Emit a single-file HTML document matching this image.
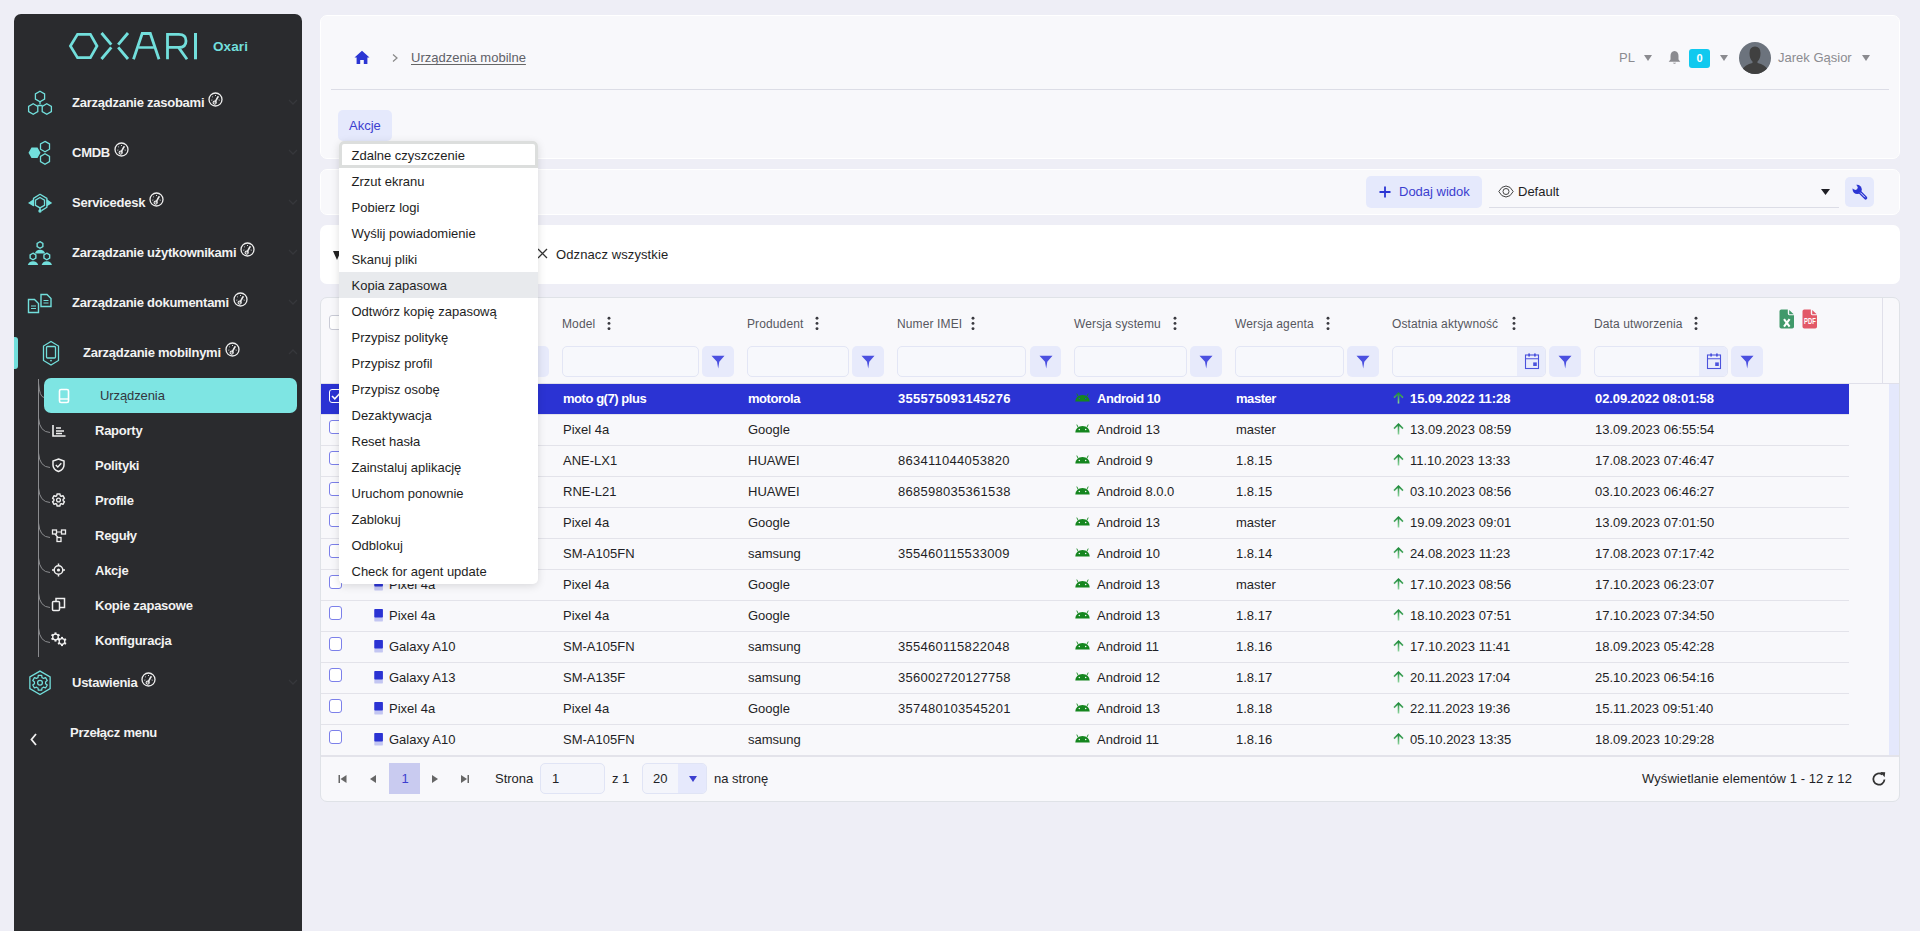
<!DOCTYPE html>
<html><head><meta charset="utf-8"><style>
*{box-sizing:border-box;margin:0;padding:0}
html,body{width:1920px;height:931px;overflow:hidden;background:#eeeef6;font-family:"Liberation Sans",sans-serif;color:#222}
.a{position:absolute;white-space:nowrap}
#sb{position:absolute;left:14px;top:14px;width:288px;height:930px;background:#2a2b2e;border-radius:7px 7px 0 0}
.mi{position:absolute;font-size:13px;font-weight:700;color:#f2f2f2;letter-spacing:-0.25px;line-height:16px;white-space:nowrap}
.card{position:absolute;left:320px;width:1580px;background:#f8f8fb;border-radius:7px}
</style></head><body>
<div id="sb"></div>
<div class="a" style="left:14px;top:337px;width:4px;height:32px;background:#72dfdc;border-radius:0 3px 3px 0"></div>
<div class="a" style="left:44px;top:378px;width:253px;height:35px;background:#7ee5e3;border-radius:7px"></div>
<svg class="a" style="left:0;top:0" width="320" height="931"><path d="M70.4,46 L77.5,34.3 L90.4,34.3 L97,46 L90.4,57.7 L77.5,57.7Z" fill="none" stroke="#72dfdc" stroke-width="2.7"/><path d="M101.5,33 L111.3,44.6 M111.3,47.4 L101.5,59 M128,33 L118.2,44.6 M118.2,47.4 L128,59" fill="none" stroke="#72dfdc" stroke-width="2.9"/><path d="M133.5,59.3 L142.2,33.5 L150.3,33.5 L159,59.3" fill="none" stroke="#72dfdc" stroke-width="2.8" stroke-linejoin="miter"/><path d="M138.6,47.5 L153.9,47.5" stroke="#72dfdc" stroke-width="2.5"/><path d="M167.5,59.3 L167.5,34.4 L178.8,34.4 Q186,34.4 186,40.9 Q186,47.4 178.8,47.4 L167.5,47.4 M178.5,47.4 L187,59.3" fill="none" stroke="#72dfdc" stroke-width="2.8"/><path d="M195.5,33 L195.5,59.3" stroke="#72dfdc" stroke-width="3"/><path d="M40.00,91.20 L44.59,93.85 L44.59,99.15 L40.00,101.80 L35.41,99.15 L35.41,93.85Z" fill="none" stroke="#72dfdc" stroke-width="1.3"/>
<path d="M33.20,103.70 L37.79,106.35 L37.79,111.65 L33.20,114.30 L28.61,111.65 L28.61,106.35Z" fill="none" stroke="#72dfdc" stroke-width="1.3"/>
<path d="M46.80,103.70 L51.39,106.35 L51.39,111.65 L46.80,114.30 L42.21,111.65 L42.21,106.35Z" fill="none" stroke="#72dfdc" stroke-width="1.3"/>
<path d="M40,101.8 L40,104.3 M37.5,105.5 L42.5,105.5" stroke="#72dfdc" stroke-width="1.3"/>
<path d="M40.50,152.80 L37.50,158.00 L31.50,158.00 L28.50,152.80 L31.50,147.60 L37.50,147.60Z" fill="#72dfdc"/>
<path d="M45.00,141.40 L49.50,144.00 L49.50,149.20 L45.00,151.80 L40.50,149.20 L40.50,144.00Z" fill="none" stroke="#72dfdc" stroke-width="1.3"/>
<path d="M45.00,153.80 L49.50,156.40 L49.50,161.60 L45.00,164.20 L40.50,161.60 L40.50,156.40Z" fill="none" stroke="#72dfdc" stroke-width="1.3"/>
<path d="M40.00,197.50 L44.50,200.10 L44.50,205.30 L40.00,207.90 L35.50,205.30 L35.50,200.10Z" fill="none" stroke="#72dfdc" stroke-width="1.3"/>
<path d="M33.5,206 L33.5,198.4 L40,194.3 L46.9,198.4 L46.9,207.3 L41.5,210.6" fill="none" stroke="#72dfdc" stroke-width="1.3" stroke-linejoin="round"/>
<path d="M28,202.9 L33.8,199 L33.8,206.5Z M52.2,202.9 L46.6,199 L46.6,206.5Z" fill="#72dfdc"/>
<path d="M40,207.5 L40,210" stroke="#72dfdc" stroke-width="1.4"/><circle cx="40" cy="211" r="1.7" fill="#72dfdc"/>
<path d="M40.00,241.70 L42.86,243.35 L42.86,246.65 L40.00,248.30 L37.14,246.65 L37.14,243.35Z" fill="none" stroke="#72dfdc" stroke-width="1.4"/><path d="M34.8,253.6 Q35.8,250 40,249.8 Q44.2,250 45.2,253.6Z" fill="#72dfdc"/>
<path d="M33.00,253.20 L35.86,254.85 L35.86,258.15 L33.00,259.80 L30.14,258.15 L30.14,254.85Z" fill="none" stroke="#72dfdc" stroke-width="1.4"/><path d="M27.8,265.1 Q28.8,261.5 33,261.3 Q37.2,261.5 38.2,265.1Z" fill="#72dfdc"/>
<path d="M46.80,253.20 L49.66,254.85 L49.66,258.15 L46.80,259.80 L43.94,258.15 L43.94,254.85Z" fill="none" stroke="#72dfdc" stroke-width="1.4"/><path d="M41.599999999999994,265.1 Q42.599999999999994,261.5 46.8,261.3 Q51.0,261.5 52.0,265.1Z" fill="#72dfdc"/>
<path d="M28.5,299.5 L34.5,299.5 L38.5,303.5 L38.5,312.5 L28.5,312.5Z" fill="none" stroke="#72dfdc" stroke-width="1.4"/><path d="M31.0,306.0 L36.0,306.0 M31.0,308.5 L36.0,308.5" stroke="#72dfdc" stroke-width="1.2"/>
<path d="M41,294.5 L47,294.5 L51,298.5 L51,306.5 L41,306.5Z" fill="none" stroke="#72dfdc" stroke-width="1.4"/><path d="M43.5,300.5 L48.5,300.5 M43.5,303.0 L48.5,303.0" stroke="#72dfdc" stroke-width="1.2"/>
<path d="M51,341.5 L58.5,346 L58.5,360.5 L51,365 L43.5,360.5 L43.5,346Z" fill="none" stroke="#72dfdc" stroke-width="1.3"/>
<rect x="46.5" y="346.5" width="9" height="11.5" rx="1" fill="none" stroke="#72dfdc" stroke-width="1.3"/><circle cx="51" cy="360.6" r="0.9" fill="#72dfdc"/>
<path d="M40.00,671.10 L50.13,676.95 L50.13,688.65 L40.00,694.50 L29.87,688.65 L29.87,676.95Z" fill="none" stroke="#72dfdc" stroke-width="1.3"/>
<path d="M37.99,677.57 L38.29,675.39 L41.71,675.39 L42.01,677.57 A5.6,5.6 0 0 1 43.52,678.45 L45.56,677.62 L47.27,680.58 L45.53,681.92 A5.6,5.6 0 0 1 45.53,683.68 L47.27,685.02 L45.56,687.98 L43.52,687.15 A5.6,5.6 0 0 1 42.01,688.03 L41.71,690.21 L38.29,690.21 L37.99,688.03 A5.6,5.6 0 0 1 36.48,687.15 L34.44,687.98 L32.73,685.02 L34.47,683.68 A5.6,5.6 0 0 1 34.47,681.92 L32.73,680.58 L34.44,677.62 L36.48,678.45 A5.6,5.6 0 0 1 37.99,677.57Z" fill="none" stroke="#72dfdc" stroke-width="1.25" stroke-linejoin="round"/><circle cx="40" cy="682.8" r="2.4" fill="none" stroke="#72dfdc" stroke-width="1.25"/>
<path d="M38.5,379 L38.5,657" stroke="#8a8b8e" stroke-width="1"/>
<path d="M38.5,383 Q39.5,397 44,397.5" fill="none" stroke="#8a8b8e" stroke-width="1"/>
<path d="M38.5,418 Q39.5,432 50,432.5" fill="none" stroke="#8a8b8e" stroke-width="1"/>
<path d="M38.5,453 Q39.5,467 50,467.5" fill="none" stroke="#8a8b8e" stroke-width="1"/>
<path d="M38.5,488 Q39.5,502 50,502.5" fill="none" stroke="#8a8b8e" stroke-width="1"/>
<path d="M38.5,523 Q39.5,537 50,537.5" fill="none" stroke="#8a8b8e" stroke-width="1"/>
<path d="M38.5,558 Q39.5,572 50,572.5" fill="none" stroke="#8a8b8e" stroke-width="1"/>
<path d="M38.5,593 Q39.5,607 50,607.5" fill="none" stroke="#8a8b8e" stroke-width="1"/>
<path d="M38.5,628 Q39.5,642 50,642.5" fill="none" stroke="#8a8b8e" stroke-width="1"/>
<rect x="59.5" y="389.5" width="9" height="13" rx="1.5" fill="none" stroke="#fff" stroke-width="1.6"/><path d="M60,399 L68,399" stroke="#fff" stroke-width="1.4"/>
<path d="M53,425 L53,436 L65.5,436" fill="none" stroke="#f0f0f0" stroke-width="1.6"/><path d="M56,428 L61,428 M56,431 L64,431 M56,433.5 L62,433.5" stroke="#f0f0f0" stroke-width="1.4"/>
<path d="M58.5,459 L64,461 L64,465 Q64,469.5 58.5,471.5 Q53,469.5 53,465 L53,461Z" fill="none" stroke="#f0f0f0" stroke-width="1.5"/><path d="M55.8,465 L57.8,467 L61.3,463.3" fill="none" stroke="#f0f0f0" stroke-width="1.4"/>
<path d="M56.78,495.73 L57.00,493.98 L60.00,493.98 L60.22,495.73 A4.6,4.6 0 0 1 61.33,496.38 L62.96,495.69 L64.46,498.29 L63.06,499.36 A4.6,4.6 0 0 1 63.06,500.64 L64.46,501.71 L62.96,504.31 L61.33,503.62 A4.6,4.6 0 0 1 60.22,504.27 L60.00,506.02 L57.00,506.02 L56.78,504.27 A4.6,4.6 0 0 1 55.67,503.62 L54.04,504.31 L52.54,501.71 L53.94,500.64 A4.6,4.6 0 0 1 53.94,499.36 L52.54,498.29 L54.04,495.69 L55.67,496.38 A4.6,4.6 0 0 1 56.78,495.73Z" fill="none" stroke="#f0f0f0" stroke-width="1.4" stroke-linejoin="round"/><circle cx="58.5" cy="500" r="1.9" fill="none" stroke="#f0f0f0" stroke-width="1.3"/>
<rect x="52.5" y="530" width="4" height="4" fill="none" stroke="#f0f0f0" stroke-width="1.3"/><rect x="61.5" y="530" width="4" height="4" fill="none" stroke="#f0f0f0" stroke-width="1.3"/><rect x="57" y="537.5" width="4" height="4" fill="none" stroke="#f0f0f0" stroke-width="1.3"/><path d="M56.5,532 L61.5,532 M55,534 L58,537.5" stroke="#f0f0f0" stroke-width="1.2"/>
<circle cx="58.5" cy="570" r="4.3" fill="none" stroke="#f0f0f0" stroke-width="1.5"/><circle cx="58.5" cy="570" r="1.6" fill="#f0f0f0"/><path d="M58.5,563.5 L58.5,565.5 M58.5,574.5 L58.5,576.5 M52,570 L54,570 M63,570 L65,570" stroke="#f0f0f0" stroke-width="1.5"/>
<rect x="52.5" y="601.5" width="7" height="9" rx="1" fill="none" stroke="#f0f0f0" stroke-width="1.5"/><path d="M56,601 L56,598.5 L64.5,598.5 L64.5,607.5 L60,607.5" fill="none" stroke="#f0f0f0" stroke-width="1.5"/>
<rect x="54.5" y="632.4000000000001" width="2" height="2" transform="rotate(0 55.5 637)" fill="#f0f0f0"/><rect x="54.5" y="632.4000000000001" width="2" height="2" transform="rotate(60 55.5 637)" fill="#f0f0f0"/><rect x="54.5" y="632.4000000000001" width="2" height="2" transform="rotate(120 55.5 637)" fill="#f0f0f0"/><rect x="54.5" y="632.4000000000001" width="2" height="2" transform="rotate(180 55.5 637)" fill="#f0f0f0"/><rect x="54.5" y="632.4000000000001" width="2" height="2" transform="rotate(240 55.5 637)" fill="#f0f0f0"/><rect x="54.5" y="632.4000000000001" width="2" height="2" transform="rotate(300 55.5 637)" fill="#f0f0f0"/><circle cx="55.5" cy="637" r="2.8" fill="none" stroke="#f0f0f0" stroke-width="1.3"/><rect x="61" y="636.9000000000001" width="2" height="2" transform="rotate(0 62 641.5)" fill="#f0f0f0"/><rect x="61" y="636.9000000000001" width="2" height="2" transform="rotate(60 62 641.5)" fill="#f0f0f0"/><rect x="61" y="636.9000000000001" width="2" height="2" transform="rotate(120 62 641.5)" fill="#f0f0f0"/><rect x="61" y="636.9000000000001" width="2" height="2" transform="rotate(180 62 641.5)" fill="#f0f0f0"/><rect x="61" y="636.9000000000001" width="2" height="2" transform="rotate(240 62 641.5)" fill="#f0f0f0"/><rect x="61" y="636.9000000000001" width="2" height="2" transform="rotate(300 62 641.5)" fill="#f0f0f0"/><circle cx="62" cy="641.5" r="2.8" fill="none" stroke="#f0f0f0" stroke-width="1.3"/>
<path d="M36,734 L31.5,739.5 L36,745" fill="none" stroke="#f0f0f0" stroke-width="1.8"/>
<path d="M289,100 L293,104 L297,100" fill="none" stroke="#36373b" stroke-width="1.3"/>
<path d="M289,150 L293,154 L297,150" fill="none" stroke="#36373b" stroke-width="1.3"/>
<path d="M289,200 L293,204 L297,200" fill="none" stroke="#36373b" stroke-width="1.3"/>
<path d="M289,250 L293,254 L297,250" fill="none" stroke="#36373b" stroke-width="1.3"/>
<path d="M289,300 L293,304 L297,300" fill="none" stroke="#36373b" stroke-width="1.3"/>
<path d="M289,680 L293,684 L297,680" fill="none" stroke="#36373b" stroke-width="1.3"/>
<path d="M289,354 L293,350 L297,354" fill="none" stroke="#36373b" stroke-width="1.3"/></svg>
<div class="a" style="left:213px;top:39px;font-size:13.5px;font-weight:700;color:#72dfdc;line-height:16px;letter-spacing:0.1px">Oxari</div>
<div class="mi" style="left:72px;top:95px"><span style="position:relative">Zarządzanie zasobami<svg width="15" height="15" viewBox="0 0 15 15" style="position:absolute;right:-19px;top:-3px"><circle cx="7.5" cy="7.5" r="6.5" fill="none" stroke="#ededed" stroke-width="1.3"/><path d="M6.8,10.6 L10.2,4.4" stroke="#ededed" stroke-width="1.6"/><circle cx="6.7" cy="10.6" r="1.6" fill="none" stroke="#ededed" stroke-width="1.1"/><path d="M3.4,8.2 L4.3,8 M4.2,4.6 L4.9,5.2 M7.5,3 L7.5,3.9 M10.8,4.6 L10.1,5.2 M11.6,8.2 L10.7,8" stroke="#ededed" stroke-width="1"/></svg></span></div>
<div class="mi" style="left:72px;top:145px"><span style="position:relative">CMDB<svg width="15" height="15" viewBox="0 0 15 15" style="position:absolute;right:-19px;top:-3px"><circle cx="7.5" cy="7.5" r="6.5" fill="none" stroke="#ededed" stroke-width="1.3"/><path d="M6.8,10.6 L10.2,4.4" stroke="#ededed" stroke-width="1.6"/><circle cx="6.7" cy="10.6" r="1.6" fill="none" stroke="#ededed" stroke-width="1.1"/><path d="M3.4,8.2 L4.3,8 M4.2,4.6 L4.9,5.2 M7.5,3 L7.5,3.9 M10.8,4.6 L10.1,5.2 M11.6,8.2 L10.7,8" stroke="#ededed" stroke-width="1"/></svg></span></div>
<div class="mi" style="left:72px;top:195px"><span style="position:relative">Servicedesk<svg width="15" height="15" viewBox="0 0 15 15" style="position:absolute;right:-19px;top:-3px"><circle cx="7.5" cy="7.5" r="6.5" fill="none" stroke="#ededed" stroke-width="1.3"/><path d="M6.8,10.6 L10.2,4.4" stroke="#ededed" stroke-width="1.6"/><circle cx="6.7" cy="10.6" r="1.6" fill="none" stroke="#ededed" stroke-width="1.1"/><path d="M3.4,8.2 L4.3,8 M4.2,4.6 L4.9,5.2 M7.5,3 L7.5,3.9 M10.8,4.6 L10.1,5.2 M11.6,8.2 L10.7,8" stroke="#ededed" stroke-width="1"/></svg></span></div>
<div class="mi" style="left:72px;top:245px"><span style="position:relative">Zarządzanie użytkownikami<svg width="15" height="15" viewBox="0 0 15 15" style="position:absolute;right:-19px;top:-3px"><circle cx="7.5" cy="7.5" r="6.5" fill="none" stroke="#ededed" stroke-width="1.3"/><path d="M6.8,10.6 L10.2,4.4" stroke="#ededed" stroke-width="1.6"/><circle cx="6.7" cy="10.6" r="1.6" fill="none" stroke="#ededed" stroke-width="1.1"/><path d="M3.4,8.2 L4.3,8 M4.2,4.6 L4.9,5.2 M7.5,3 L7.5,3.9 M10.8,4.6 L10.1,5.2 M11.6,8.2 L10.7,8" stroke="#ededed" stroke-width="1"/></svg></span></div>
<div class="mi" style="left:72px;top:295px"><span style="position:relative">Zarządzanie dokumentami<svg width="15" height="15" viewBox="0 0 15 15" style="position:absolute;right:-19px;top:-3px"><circle cx="7.5" cy="7.5" r="6.5" fill="none" stroke="#ededed" stroke-width="1.3"/><path d="M6.8,10.6 L10.2,4.4" stroke="#ededed" stroke-width="1.6"/><circle cx="6.7" cy="10.6" r="1.6" fill="none" stroke="#ededed" stroke-width="1.1"/><path d="M3.4,8.2 L4.3,8 M4.2,4.6 L4.9,5.2 M7.5,3 L7.5,3.9 M10.8,4.6 L10.1,5.2 M11.6,8.2 L10.7,8" stroke="#ededed" stroke-width="1"/></svg></span></div>
<div class="mi" style="left:83px;top:345px"><span style="position:relative">Zarządzanie mobilnymi<svg width="15" height="15" viewBox="0 0 15 15" style="position:absolute;right:-19px;top:-3px"><circle cx="7.5" cy="7.5" r="6.5" fill="none" stroke="#ededed" stroke-width="1.3"/><path d="M6.8,10.6 L10.2,4.4" stroke="#ededed" stroke-width="1.6"/><circle cx="6.7" cy="10.6" r="1.6" fill="none" stroke="#ededed" stroke-width="1.1"/><path d="M3.4,8.2 L4.3,8 M4.2,4.6 L4.9,5.2 M7.5,3 L7.5,3.9 M10.8,4.6 L10.1,5.2 M11.6,8.2 L10.7,8" stroke="#ededed" stroke-width="1"/></svg></span></div>
<div class="mi" style="left:72px;top:675px"><span style="position:relative">Ustawienia<svg width="15" height="15" viewBox="0 0 15 15" style="position:absolute;right:-19px;top:-3px"><circle cx="7.5" cy="7.5" r="6.5" fill="none" stroke="#ededed" stroke-width="1.3"/><path d="M6.8,10.6 L10.2,4.4" stroke="#ededed" stroke-width="1.6"/><circle cx="6.7" cy="10.6" r="1.6" fill="none" stroke="#ededed" stroke-width="1.1"/><path d="M3.4,8.2 L4.3,8 M4.2,4.6 L4.9,5.2 M7.5,3 L7.5,3.9 M10.8,4.6 L10.1,5.2 M11.6,8.2 L10.7,8" stroke="#ededed" stroke-width="1"/></svg></span></div>
<div class="a" style="left:100px;top:388px;font-size:13px;color:#33363f;line-height:16px;letter-spacing:-0.1px">Urządzenia</div>
<div class="mi" style="left:95px;top:423px">Raporty</div>
<div class="mi" style="left:95px;top:458px">Polityki</div>
<div class="mi" style="left:95px;top:493px">Profile</div>
<div class="mi" style="left:95px;top:528px">Reguły</div>
<div class="mi" style="left:95px;top:563px">Akcje</div>
<div class="mi" style="left:95px;top:598px">Kopie zapasowe</div>
<div class="mi" style="left:95px;top:633px">Konfiguracja</div>
<div class="mi" style="left:70px;top:725px">Przełącz menu</div>
<div class="card" style="top:15px;height:144px;border:1px solid #fff"></div>
<div class="card" style="top:169px;height:46px;border:1px solid #fff"></div>
<div class="card" style="top:225px;height:59px;background:#fff"></div>
<div class="card" style="top:297px;height:505px;border:1px solid #dfe2e7"></div>
<svg class="a" style="left:354px;top:50px" width="16" height="15" viewBox="0 0 16 15"><path d="M8,0.8 L15.5,7.6 L13.4,7.6 L13.4,14 L9.8,14 L9.8,10 L6.2,10 L6.2,14 L2.6,14 L2.6,7.6 L0.5,7.6Z" fill="#2b35d3"/></svg>
<svg class="a" style="left:390px;top:52px" width="10" height="12"><path d="M3,2.5 L7,6 L3,9.5" fill="none" stroke="#888" stroke-width="1.2"/></svg>
<div class="a" style="left:411px;top:51.00px;font-size:13px;line-height:13px;font-weight:400;color:#5f6168;text-decoration:underline;text-underline-offset:2px;text-decoration-color:#666;text-decoration-skip-ink:none">Urządzenia mobilne</div>
<div class="a" style="left:331px;top:89px;width:1558px;height:1px;background:#dcdde6"></div>
<div class="a" style="left:338px;top:110px;width:54px;height:31px;background:#e5e9fc;border-radius:5px"></div>
<div class="a" style="left:349px;top:119.00px;font-size:13px;line-height:13px;font-weight:400;color:#3b3ecf;">Akcje</div>
<div class="a" style="left:1619px;top:51.00px;font-size:13px;line-height:13px;font-weight:400;color:#8b8b90;">PL</div>
<svg class="a" style="left:1644px;top:55px" width="8" height="6"><path d="M0,0 L8,0 L4.0,6Z" fill="#8b8b90"/></svg>
<svg class="a" style="left:1668px;top:50px" width="13" height="15" viewBox="0 0 13 15"><path d="M6.5,1 Q10.5,1.5 10.5,6 L10.5,9.5 L12.3,11.8 L0.7,11.8 L2.5,9.5 L2.5,6 Q2.5,1.5 6.5,1Z" fill="#8b8b90"/><path d="M4.8,12.8 Q6.5,14.8 8.2,12.8Z" fill="#8b8b90"/></svg>
<div class="a" style="left:1689px;top:49px;width:21px;height:19px;background:#10c9ef;border-radius:3px;color:#fff;font-size:11px;font-weight:700;line-height:19px;text-align:center">0</div>
<svg class="a" style="left:1720px;top:55px" width="8" height="6"><path d="M0,0 L8,0 L4.0,6Z" fill="#8b8b90"/></svg>
<svg class="a" style="left:1739px;top:42px" width="32" height="32" viewBox="0 0 32 32"><defs><clipPath id="cav"><circle cx="16" cy="16" r="16"/></clipPath></defs><circle cx="16" cy="16" r="16" fill="#6c737d"/><g clip-path="url(#cav)"><path d="M16,4.5 Q21.5,4.5 21.5,11 Q21.5,17 18.5,19.5 L18.5,21 Q26,22.5 29,28 L29,33 L3,33 L3,28 Q6,22.5 13.5,21 L13.5,19.5 Q10.5,17 10.5,11 Q10.5,4.5 16,4.5Z" fill="#404040"/></g></svg>
<div class="a" style="left:1778px;top:51.00px;font-size:13px;line-height:13px;font-weight:400;color:#8b8b90;">Jarek Gąsior</div>
<svg class="a" style="left:1862px;top:55px" width="8" height="6"><path d="M0,0 L8,0 L4.0,6Z" fill="#8b8b90"/></svg>
<div class="a" style="left:1366px;top:176px;width:116px;height:32px;background:#e5e9fc;border-radius:5px"></div>
<svg class="a" style="left:1379px;top:186px" width="12" height="12"><path d="M6,0.5 L6,11.5 M0.5,6 L11.5,6" stroke="#2b35d3" stroke-width="1.8"/></svg>
<div class="a" style="left:1399px;top:185.00px;font-size:13px;line-height:13px;font-weight:400;color:#3b3ecf;">Dodaj widok</div>
<svg class="a" style="left:1497.5px;top:184.5px" width="16" height="13" viewBox="0 0 16 13"><path d="M0.8,6.5 Q3.5,1 8,1 Q12.5,1 15.2,6.5 Q12.5,12 8,12 Q3.5,12 0.8,6.5Z" fill="none" stroke="#444" stroke-width="1"/><circle cx="8" cy="6.5" r="3" fill="none" stroke="#444" stroke-width="1"/></svg>
<div class="a" style="left:1518px;top:185.00px;font-size:13px;line-height:13px;font-weight:400;color:#1e1e24;">Default</div>
<svg class="a" style="left:1821px;top:189px" width="9" height="6"><path d="M0,0 L9,0 L4.5,6Z" fill="#1e1e24"/></svg>
<div class="a" style="left:1489px;top:207px;width:350px;height:1px;background:#dcdde6"></div>
<div class="a" style="left:1845px;top:177px;width:29px;height:30px;background:#e5e9fc;border-radius:5px"></div>
<svg class="a" style="left:1845px;top:177px" width="29" height="30" viewBox="0 0 29 30"><defs><mask id="wm"><rect width="29" height="30" fill="#fff"/><circle cx="10.4" cy="10.6" r="2.3" fill="#000"/><path d="M10.4,10.6 L7,7.2" stroke="#000" stroke-width="4.6"/></mask></defs><g mask="url(#wm)"><circle cx="12.2" cy="12.4" r="4.6" fill="#2b35d3"/></g><path d="M14.6,14.9 L20.6,20.9" stroke="#2b35d3" stroke-width="3.4" stroke-linecap="round"/><path d="M15.3,15.6 L20,20.3" stroke="#e5e9fc" stroke-width="1"/></svg>
<svg class="a" style="left:332px;top:250px" width="10" height="12"><path d="M1,1 L9,1 L5,10Z" fill="#222"/></svg>
<svg class="a" style="left:537px;top:248px" width="11" height="11"><path d="M1,1 L10,10 M10,1 L1,10" stroke="#333" stroke-width="1.3"/></svg>
<div class="a" style="left:556px;top:247.50px;font-size:13px;line-height:13px;font-weight:400;color:#1e1e24;letter-spacing:0.1px">Odznacz wszystkie</div>
<div class="a" style="left:1882px;top:298px;width:1px;height:85px;background:#e0e0ea"></div>
<div class="a" style="left:321px;top:383px;width:1578px;height:1px;background:#e0e0ea"></div>
<div class="a" style="left:1889px;top:384px;width:10px;height:371px;background:#e4e8fc"></div>
<div class="a" style="left:329px;top:315px;width:13px;height:15px;border:1px solid #c9cbd6;border-radius:3px;background:#fff"></div>
<div class="a" style="left:517px;top:346px;width:32px;height:31px;background:#e7eafb;border-radius:5px"></div>
<div class="a" style="left:562px;top:317.84px;font-size:12px;line-height:12px;font-weight:400;color:#56575e;letter-spacing:0.12px">Model</div>
<svg class="a" style="left:607px;top:316px" width="4" height="14"><circle cx="2" cy="2.2" r="1.45" fill="#3a3a40"/><circle cx="2" cy="7.4" r="1.45" fill="#3a3a40"/><circle cx="2" cy="12.6" r="1.45" fill="#3a3a40"/></svg>
<div class="a" style="left:562px;top:346px;width:137px;height:31px;border:1px solid #e3e6f5;border-radius:5px;background:#f7f8fc;overflow:hidden"></div>
<div class="a" style="left:702px;top:346px;width:32px;height:31px;background:#e7eafb;border-radius:5px"></div>
<svg class="a" style="left:711.0px;top:355px" width="14" height="14" viewBox="0 0 14 14"><path d="M0.5,0.8 L13.5,0.8 L8.3,6.8 L7.2,13.6 L6,6.8Z" fill="#4b50e0"/></svg>
<div class="a" style="left:747px;top:317.84px;font-size:12px;line-height:12px;font-weight:400;color:#56575e;letter-spacing:0.12px">Produdent</div>
<svg class="a" style="left:815px;top:316px" width="4" height="14"><circle cx="2" cy="2.2" r="1.45" fill="#3a3a40"/><circle cx="2" cy="7.4" r="1.45" fill="#3a3a40"/><circle cx="2" cy="12.6" r="1.45" fill="#3a3a40"/></svg>
<div class="a" style="left:747px;top:346px;width:101.5px;height:31px;border:1px solid #e3e6f5;border-radius:5px;background:#f7f8fc;overflow:hidden"></div>
<div class="a" style="left:852px;top:346px;width:32px;height:31px;background:#e7eafb;border-radius:5px"></div>
<svg class="a" style="left:861.0px;top:355px" width="14" height="14" viewBox="0 0 14 14"><path d="M0.5,0.8 L13.5,0.8 L8.3,6.8 L7.2,13.6 L6,6.8Z" fill="#4b50e0"/></svg>
<div class="a" style="left:897px;top:317.84px;font-size:12px;line-height:12px;font-weight:400;color:#56575e;letter-spacing:0.12px">Numer IMEI</div>
<svg class="a" style="left:971px;top:316px" width="4" height="14"><circle cx="2" cy="2.2" r="1.45" fill="#3a3a40"/><circle cx="2" cy="7.4" r="1.45" fill="#3a3a40"/><circle cx="2" cy="12.6" r="1.45" fill="#3a3a40"/></svg>
<div class="a" style="left:897px;top:346px;width:129px;height:31px;border:1px solid #e3e6f5;border-radius:5px;background:#f7f8fc;overflow:hidden"></div>
<div class="a" style="left:1030px;top:346px;width:31px;height:31px;background:#e7eafb;border-radius:5px"></div>
<svg class="a" style="left:1038.5px;top:355px" width="14" height="14" viewBox="0 0 14 14"><path d="M0.5,0.8 L13.5,0.8 L8.3,6.8 L7.2,13.6 L6,6.8Z" fill="#4b50e0"/></svg>
<div class="a" style="left:1074px;top:317.84px;font-size:12px;line-height:12px;font-weight:400;color:#56575e;letter-spacing:0.12px">Wersja systemu</div>
<svg class="a" style="left:1173px;top:316px" width="4" height="14"><circle cx="2" cy="2.2" r="1.45" fill="#3a3a40"/><circle cx="2" cy="7.4" r="1.45" fill="#3a3a40"/><circle cx="2" cy="12.6" r="1.45" fill="#3a3a40"/></svg>
<div class="a" style="left:1074px;top:346px;width:112.5px;height:31px;border:1px solid #e3e6f5;border-radius:5px;background:#f7f8fc;overflow:hidden"></div>
<div class="a" style="left:1190px;top:346px;width:32px;height:31px;background:#e7eafb;border-radius:5px"></div>
<svg class="a" style="left:1199.0px;top:355px" width="14" height="14" viewBox="0 0 14 14"><path d="M0.5,0.8 L13.5,0.8 L8.3,6.8 L7.2,13.6 L6,6.8Z" fill="#4b50e0"/></svg>
<div class="a" style="left:1235px;top:317.84px;font-size:12px;line-height:12px;font-weight:400;color:#56575e;letter-spacing:0.12px">Wersja agenta</div>
<svg class="a" style="left:1326px;top:316px" width="4" height="14"><circle cx="2" cy="2.2" r="1.45" fill="#3a3a40"/><circle cx="2" cy="7.4" r="1.45" fill="#3a3a40"/><circle cx="2" cy="12.6" r="1.45" fill="#3a3a40"/></svg>
<div class="a" style="left:1235px;top:346px;width:108.5px;height:31px;border:1px solid #e3e6f5;border-radius:5px;background:#f7f8fc;overflow:hidden"></div>
<div class="a" style="left:1347px;top:346px;width:32px;height:31px;background:#e7eafb;border-radius:5px"></div>
<svg class="a" style="left:1356.0px;top:355px" width="14" height="14" viewBox="0 0 14 14"><path d="M0.5,0.8 L13.5,0.8 L8.3,6.8 L7.2,13.6 L6,6.8Z" fill="#4b50e0"/></svg>
<div class="a" style="left:1392px;top:317.84px;font-size:12px;line-height:12px;font-weight:400;color:#56575e;letter-spacing:0.12px">Ostatnia aktywność</div>
<svg class="a" style="left:1511.5px;top:316px" width="4" height="14"><circle cx="2" cy="2.2" r="1.45" fill="#3a3a40"/><circle cx="2" cy="7.4" r="1.45" fill="#3a3a40"/><circle cx="2" cy="12.6" r="1.45" fill="#3a3a40"/></svg>
<div class="a" style="left:1392px;top:346px;width:154px;height:31px;border:1px solid #e3e6f5;border-radius:5px;background:#f7f8fc;overflow:hidden"><div style="position:absolute;right:0;top:0;width:28px;height:29px;background:#e9ecfb"></div><svg style="position:absolute;right:5px;top:6px" width="16" height="17" viewBox="0 0 16 17"><rect x="1.5" y="2" width="13" height="13.5" fill="none" stroke="#4b52dc" stroke-width="1.1"/><path d="M1.5,5.7 L14.5,5.7" stroke="#4b52dc" stroke-width="1.1"/><rect x="4.2" y="0.5" width="1.8" height="3" fill="#4b52dc"/><rect x="10" y="0.5" width="1.8" height="3" fill="#4b52dc"/><rect x="9.2" y="9.4" width="3.6" height="3.6" fill="#4b52dc"/></svg></div>
<div class="a" style="left:1549px;top:346px;width:32px;height:31px;background:#e7eafb;border-radius:5px"></div>
<svg class="a" style="left:1558.0px;top:355px" width="14" height="14" viewBox="0 0 14 14"><path d="M0.5,0.8 L13.5,0.8 L8.3,6.8 L7.2,13.6 L6,6.8Z" fill="#4b50e0"/></svg>
<div class="a" style="left:1594px;top:317.84px;font-size:12px;line-height:12px;font-weight:400;color:#56575e;letter-spacing:0.12px">Data utworzenia</div>
<svg class="a" style="left:1694px;top:316px" width="4" height="14"><circle cx="2" cy="2.2" r="1.45" fill="#3a3a40"/><circle cx="2" cy="7.4" r="1.45" fill="#3a3a40"/><circle cx="2" cy="12.6" r="1.45" fill="#3a3a40"/></svg>
<div class="a" style="left:1594px;top:346px;width:133.5px;height:31px;border:1px solid #e3e6f5;border-radius:5px;background:#f7f8fc;overflow:hidden"><div style="position:absolute;right:0;top:0;width:28px;height:29px;background:#e9ecfb"></div><svg style="position:absolute;right:5px;top:6px" width="16" height="17" viewBox="0 0 16 17"><rect x="1.5" y="2" width="13" height="13.5" fill="none" stroke="#4b52dc" stroke-width="1.1"/><path d="M1.5,5.7 L14.5,5.7" stroke="#4b52dc" stroke-width="1.1"/><rect x="4.2" y="0.5" width="1.8" height="3" fill="#4b52dc"/><rect x="10" y="0.5" width="1.8" height="3" fill="#4b52dc"/><rect x="9.2" y="9.4" width="3.6" height="3.6" fill="#4b52dc"/></svg></div>
<div class="a" style="left:1731px;top:346px;width:32px;height:31px;background:#e7eafb;border-radius:5px"></div>
<svg class="a" style="left:1740.0px;top:355px" width="14" height="14" viewBox="0 0 14 14"><path d="M0.5,0.8 L13.5,0.8 L8.3,6.8 L7.2,13.6 L6,6.8Z" fill="#4b50e0"/></svg>
<svg class="a" style="left:1779px;top:308.5px" width="16" height="20" viewBox="0 0 16 20"><path d="M0.5,2.3 Q0.5,0.5 2.3,0.5 L8.8,0.5 L8.8,4.6 Q8.8,6.2 10.4,6.2 L15,6.2 L15,17.8 Q15,19.6 13.2,19.6 L2.3,19.6 Q0.5,19.6 0.5,17.8Z" fill="#40996a"/><path d="M10.2,0.9 L14.7,5.2 L10.2,5.2Z" fill="#40996a"/><path d="M5,10.2 L10.6,17.6 M10.6,10.2 L5,17.6" stroke="#fff" stroke-width="2.1"/></svg>
<svg class="a" style="left:1802px;top:308.5px" width="16" height="20" viewBox="0 0 16 20"><path d="M0.5,2.3 Q0.5,0.5 2.3,0.5 L8.8,0.5 L8.8,4.6 Q8.8,6.2 10.4,6.2 L15,6.2 L15,17.8 Q15,19.6 13.2,19.6 L2.3,19.6 Q0.5,19.6 0.5,17.8Z" fill="#e25868"/><path d="M10.2,0.9 L14.7,5.2 L10.2,5.2Z" fill="#e25868"/><text x="2" y="15" font-family="Liberation Sans" font-weight="700" font-size="8.6" fill="#fff" textLength="11.8" lengthAdjust="spacingAndGlyphs">PDF</text></svg>
<div class="a" style="left:321px;top:384px;width:1528px;height:30px;background:#2b33d3"></div>
<div class="a" style="left:329px;top:389px;width:13px;height:14px;border:1.3px solid #fff;border-radius:3px;background:#2b33d3"></div>
<svg class="a" style="left:331px;top:392px" width="10" height="8"><path d="M1,4 L3.8,6.8 L9,1.2" fill="none" stroke="#fff" stroke-width="1.6"/></svg>
<div class="a" style="left:563px;top:392.00px;font-size:13px;line-height:13px;font-weight:700;color:#fff;letter-spacing:-0.45px;">moto g(7) plus</div>
<div class="a" style="left:748px;top:392.00px;font-size:13px;line-height:13px;font-weight:700;color:#fff;letter-spacing:-0.45px;">motorola</div>
<div class="a" style="left:898px;top:392.00px;font-size:13px;line-height:13px;font-weight:700;color:#fff;letter-spacing:0.28px;">355575093145276</div>
<svg class="a" style="left:1075px;top:392px" width="15" height="10" viewBox="0 0 15 10"><path d="M0.3,9.6 Q0.8,3.2 7.5,3 Q14.2,3.2 14.7,9.6Z" fill="#15861f"/><path d="M3,4.2 L1.8,1.6 M12,4.2 L13.2,1.6" stroke="#15861f" stroke-width="0.9"/><circle cx="4.3" cy="6.5" r="0.75" fill="#2b33d3"/><circle cx="10.7" cy="6.5" r="0.75" fill="#2b33d3"/></svg>
<div class="a" style="left:1097px;top:392.00px;font-size:13px;line-height:13px;font-weight:700;color:#fff;letter-spacing:-0.45px;">Android 10</div>
<div class="a" style="left:1236px;top:392.00px;font-size:13px;line-height:13px;font-weight:700;color:#fff;letter-spacing:-0.45px;">master</div>
<svg class="a" style="left:1392.5px;top:392px" width="11" height="12" viewBox="0 0 11 12"><defs><linearGradient id="ag" x1="0" y1="0" x2="0" y2="1"><stop offset="0" stop-color="#1e8a3a"/><stop offset="1" stop-color="#8fd69f"/></linearGradient></defs><path d="M5.5,1.2 L5.5,11.6 M1,5.6 L5.5,1.2 L10,5.6" fill="none" stroke="url(#ag)" stroke-width="1.6"/></svg>
<div class="a" style="left:1410px;top:392.00px;font-size:13px;line-height:13px;font-weight:700;color:#fff;letter-spacing:-0.05px;">15.09.2022 11:28</div>
<div class="a" style="left:1595px;top:392.00px;font-size:13px;line-height:13px;font-weight:700;color:#fff;letter-spacing:-0.1px;">02.09.2022 08:01:58</div>
<div class="a" style="left:321px;top:414px;width:1528px;height:1px;background:#e3e3ea"></div>
<div class="a" style="left:329px;top:420px;width:13px;height:14px;border:1.3px solid #7c80ea;border-radius:3px;background:#fff"></div>
<svg class="a" style="left:373.5px;top:422.8px" width="10" height="13" viewBox="0 0 10 13"><rect x="0.3" y="0" width="8.6" height="12.6" rx="1.2" fill="#c3c6f2"/><rect x="0.3" y="0" width="8.6" height="8.6" rx="0.8" fill="#2b33d3"/></svg>
<div class="a" style="left:389px;top:423.00px;font-size:13px;line-height:13px;font-weight:400;color:#1f1f26;">Pixel 4a</div>
<div class="a" style="left:563px;top:423.00px;font-size:13px;line-height:13px;font-weight:400;color:#1f1f26;">Pixel 4a</div>
<div class="a" style="left:748px;top:423.00px;font-size:13px;line-height:13px;font-weight:400;color:#1f1f26;">Google</div>
<svg class="a" style="left:1075px;top:423px" width="15" height="10" viewBox="0 0 15 10"><path d="M0.3,9.6 Q0.8,3.2 7.5,3 Q14.2,3.2 14.7,9.6Z" fill="#15861f"/><path d="M3,4.2 L1.8,1.6 M12,4.2 L13.2,1.6" stroke="#15861f" stroke-width="0.9"/><circle cx="4.3" cy="6.5" r="0.75" fill="#f8f8fb"/><circle cx="10.7" cy="6.5" r="0.75" fill="#f8f8fb"/></svg>
<div class="a" style="left:1097px;top:423.00px;font-size:13px;line-height:13px;font-weight:400;color:#1f1f26;">Android 13</div>
<div class="a" style="left:1236px;top:423.00px;font-size:13px;line-height:13px;font-weight:400;color:#1f1f26;">master</div>
<svg class="a" style="left:1392.5px;top:423px" width="11" height="12" viewBox="0 0 11 12"><defs><linearGradient id="ag" x1="0" y1="0" x2="0" y2="1"><stop offset="0" stop-color="#1e8a3a"/><stop offset="1" stop-color="#8fd69f"/></linearGradient></defs><path d="M5.5,1.2 L5.5,11.6 M1,5.6 L5.5,1.2 L10,5.6" fill="none" stroke="url(#ag)" stroke-width="1.6"/></svg>
<div class="a" style="left:1410px;top:423.00px;font-size:13px;line-height:13px;font-weight:400;color:#1f1f26;">13.09.2023 08:59</div>
<div class="a" style="left:1595px;top:423.00px;font-size:13px;line-height:13px;font-weight:400;color:#1f1f26;">13.09.2023 06:55:54</div>
<div class="a" style="left:321px;top:445px;width:1528px;height:1px;background:#e3e3ea"></div>
<div class="a" style="left:329px;top:451px;width:13px;height:14px;border:1.3px solid #7c80ea;border-radius:3px;background:#fff"></div>
<svg class="a" style="left:373.5px;top:453.8px" width="10" height="13" viewBox="0 0 10 13"><rect x="0.3" y="0" width="8.6" height="12.6" rx="1.2" fill="#c3c6f2"/><rect x="0.3" y="0" width="8.6" height="8.6" rx="0.8" fill="#2b33d3"/></svg>
<div class="a" style="left:389px;top:454.00px;font-size:13px;line-height:13px;font-weight:400;color:#1f1f26;">ANE-LX1</div>
<div class="a" style="left:563px;top:454.00px;font-size:13px;line-height:13px;font-weight:400;color:#1f1f26;">ANE-LX1</div>
<div class="a" style="left:748px;top:454.00px;font-size:13px;line-height:13px;font-weight:400;color:#1f1f26;">HUAWEI</div>
<div class="a" style="left:898px;top:454.00px;font-size:13px;line-height:13px;font-weight:400;color:#1f1f26;letter-spacing:0.28px;">863411044053820</div>
<svg class="a" style="left:1075px;top:454px" width="15" height="10" viewBox="0 0 15 10"><path d="M0.3,9.6 Q0.8,3.2 7.5,3 Q14.2,3.2 14.7,9.6Z" fill="#15861f"/><path d="M3,4.2 L1.8,1.6 M12,4.2 L13.2,1.6" stroke="#15861f" stroke-width="0.9"/><circle cx="4.3" cy="6.5" r="0.75" fill="#f8f8fb"/><circle cx="10.7" cy="6.5" r="0.75" fill="#f8f8fb"/></svg>
<div class="a" style="left:1097px;top:454.00px;font-size:13px;line-height:13px;font-weight:400;color:#1f1f26;">Android 9</div>
<div class="a" style="left:1236px;top:454.00px;font-size:13px;line-height:13px;font-weight:400;color:#1f1f26;">1.8.15</div>
<svg class="a" style="left:1392.5px;top:454px" width="11" height="12" viewBox="0 0 11 12"><defs><linearGradient id="ag" x1="0" y1="0" x2="0" y2="1"><stop offset="0" stop-color="#1e8a3a"/><stop offset="1" stop-color="#8fd69f"/></linearGradient></defs><path d="M5.5,1.2 L5.5,11.6 M1,5.6 L5.5,1.2 L10,5.6" fill="none" stroke="url(#ag)" stroke-width="1.6"/></svg>
<div class="a" style="left:1410px;top:454.00px;font-size:13px;line-height:13px;font-weight:400;color:#1f1f26;">11.10.2023 13:33</div>
<div class="a" style="left:1595px;top:454.00px;font-size:13px;line-height:13px;font-weight:400;color:#1f1f26;">17.08.2023 07:46:47</div>
<div class="a" style="left:321px;top:476px;width:1528px;height:1px;background:#e3e3ea"></div>
<div class="a" style="left:329px;top:482px;width:13px;height:14px;border:1.3px solid #7c80ea;border-radius:3px;background:#fff"></div>
<svg class="a" style="left:373.5px;top:484.8px" width="10" height="13" viewBox="0 0 10 13"><rect x="0.3" y="0" width="8.6" height="12.6" rx="1.2" fill="#c3c6f2"/><rect x="0.3" y="0" width="8.6" height="8.6" rx="0.8" fill="#2b33d3"/></svg>
<div class="a" style="left:389px;top:485.00px;font-size:13px;line-height:13px;font-weight:400;color:#1f1f26;">RNE-L21</div>
<div class="a" style="left:563px;top:485.00px;font-size:13px;line-height:13px;font-weight:400;color:#1f1f26;">RNE-L21</div>
<div class="a" style="left:748px;top:485.00px;font-size:13px;line-height:13px;font-weight:400;color:#1f1f26;">HUAWEI</div>
<div class="a" style="left:898px;top:485.00px;font-size:13px;line-height:13px;font-weight:400;color:#1f1f26;letter-spacing:0.28px;">868598035361538</div>
<svg class="a" style="left:1075px;top:485px" width="15" height="10" viewBox="0 0 15 10"><path d="M0.3,9.6 Q0.8,3.2 7.5,3 Q14.2,3.2 14.7,9.6Z" fill="#15861f"/><path d="M3,4.2 L1.8,1.6 M12,4.2 L13.2,1.6" stroke="#15861f" stroke-width="0.9"/><circle cx="4.3" cy="6.5" r="0.75" fill="#f8f8fb"/><circle cx="10.7" cy="6.5" r="0.75" fill="#f8f8fb"/></svg>
<div class="a" style="left:1097px;top:485.00px;font-size:13px;line-height:13px;font-weight:400;color:#1f1f26;">Android 8.0.0</div>
<div class="a" style="left:1236px;top:485.00px;font-size:13px;line-height:13px;font-weight:400;color:#1f1f26;">1.8.15</div>
<svg class="a" style="left:1392.5px;top:485px" width="11" height="12" viewBox="0 0 11 12"><defs><linearGradient id="ag" x1="0" y1="0" x2="0" y2="1"><stop offset="0" stop-color="#1e8a3a"/><stop offset="1" stop-color="#8fd69f"/></linearGradient></defs><path d="M5.5,1.2 L5.5,11.6 M1,5.6 L5.5,1.2 L10,5.6" fill="none" stroke="url(#ag)" stroke-width="1.6"/></svg>
<div class="a" style="left:1410px;top:485.00px;font-size:13px;line-height:13px;font-weight:400;color:#1f1f26;">03.10.2023 08:56</div>
<div class="a" style="left:1595px;top:485.00px;font-size:13px;line-height:13px;font-weight:400;color:#1f1f26;">03.10.2023 06:46:27</div>
<div class="a" style="left:321px;top:507px;width:1528px;height:1px;background:#e3e3ea"></div>
<div class="a" style="left:329px;top:513px;width:13px;height:14px;border:1.3px solid #7c80ea;border-radius:3px;background:#fff"></div>
<svg class="a" style="left:373.5px;top:515.8px" width="10" height="13" viewBox="0 0 10 13"><rect x="0.3" y="0" width="8.6" height="12.6" rx="1.2" fill="#c3c6f2"/><rect x="0.3" y="0" width="8.6" height="8.6" rx="0.8" fill="#2b33d3"/></svg>
<div class="a" style="left:389px;top:516.00px;font-size:13px;line-height:13px;font-weight:400;color:#1f1f26;">Pixel 4a</div>
<div class="a" style="left:563px;top:516.00px;font-size:13px;line-height:13px;font-weight:400;color:#1f1f26;">Pixel 4a</div>
<div class="a" style="left:748px;top:516.00px;font-size:13px;line-height:13px;font-weight:400;color:#1f1f26;">Google</div>
<svg class="a" style="left:1075px;top:516px" width="15" height="10" viewBox="0 0 15 10"><path d="M0.3,9.6 Q0.8,3.2 7.5,3 Q14.2,3.2 14.7,9.6Z" fill="#15861f"/><path d="M3,4.2 L1.8,1.6 M12,4.2 L13.2,1.6" stroke="#15861f" stroke-width="0.9"/><circle cx="4.3" cy="6.5" r="0.75" fill="#f8f8fb"/><circle cx="10.7" cy="6.5" r="0.75" fill="#f8f8fb"/></svg>
<div class="a" style="left:1097px;top:516.00px;font-size:13px;line-height:13px;font-weight:400;color:#1f1f26;">Android 13</div>
<div class="a" style="left:1236px;top:516.00px;font-size:13px;line-height:13px;font-weight:400;color:#1f1f26;">master</div>
<svg class="a" style="left:1392.5px;top:516px" width="11" height="12" viewBox="0 0 11 12"><defs><linearGradient id="ag" x1="0" y1="0" x2="0" y2="1"><stop offset="0" stop-color="#1e8a3a"/><stop offset="1" stop-color="#8fd69f"/></linearGradient></defs><path d="M5.5,1.2 L5.5,11.6 M1,5.6 L5.5,1.2 L10,5.6" fill="none" stroke="url(#ag)" stroke-width="1.6"/></svg>
<div class="a" style="left:1410px;top:516.00px;font-size:13px;line-height:13px;font-weight:400;color:#1f1f26;">19.09.2023 09:01</div>
<div class="a" style="left:1595px;top:516.00px;font-size:13px;line-height:13px;font-weight:400;color:#1f1f26;">13.09.2023 07:01:50</div>
<div class="a" style="left:321px;top:538px;width:1528px;height:1px;background:#e3e3ea"></div>
<div class="a" style="left:329px;top:544px;width:13px;height:14px;border:1.3px solid #7c80ea;border-radius:3px;background:#fff"></div>
<svg class="a" style="left:373.5px;top:546.8px" width="10" height="13" viewBox="0 0 10 13"><rect x="0.3" y="0" width="8.6" height="12.6" rx="1.2" fill="#c3c6f2"/><rect x="0.3" y="0" width="8.6" height="8.6" rx="0.8" fill="#2b33d3"/></svg>
<div class="a" style="left:389px;top:547.00px;font-size:13px;line-height:13px;font-weight:400;color:#1f1f26;">Galaxy A10</div>
<div class="a" style="left:563px;top:547.00px;font-size:13px;line-height:13px;font-weight:400;color:#1f1f26;">SM-A105FN</div>
<div class="a" style="left:748px;top:547.00px;font-size:13px;line-height:13px;font-weight:400;color:#1f1f26;">samsung</div>
<div class="a" style="left:898px;top:547.00px;font-size:13px;line-height:13px;font-weight:400;color:#1f1f26;letter-spacing:0.28px;">355460115533009</div>
<svg class="a" style="left:1075px;top:547px" width="15" height="10" viewBox="0 0 15 10"><path d="M0.3,9.6 Q0.8,3.2 7.5,3 Q14.2,3.2 14.7,9.6Z" fill="#15861f"/><path d="M3,4.2 L1.8,1.6 M12,4.2 L13.2,1.6" stroke="#15861f" stroke-width="0.9"/><circle cx="4.3" cy="6.5" r="0.75" fill="#f8f8fb"/><circle cx="10.7" cy="6.5" r="0.75" fill="#f8f8fb"/></svg>
<div class="a" style="left:1097px;top:547.00px;font-size:13px;line-height:13px;font-weight:400;color:#1f1f26;">Android 10</div>
<div class="a" style="left:1236px;top:547.00px;font-size:13px;line-height:13px;font-weight:400;color:#1f1f26;">1.8.14</div>
<svg class="a" style="left:1392.5px;top:547px" width="11" height="12" viewBox="0 0 11 12"><defs><linearGradient id="ag" x1="0" y1="0" x2="0" y2="1"><stop offset="0" stop-color="#1e8a3a"/><stop offset="1" stop-color="#8fd69f"/></linearGradient></defs><path d="M5.5,1.2 L5.5,11.6 M1,5.6 L5.5,1.2 L10,5.6" fill="none" stroke="url(#ag)" stroke-width="1.6"/></svg>
<div class="a" style="left:1410px;top:547.00px;font-size:13px;line-height:13px;font-weight:400;color:#1f1f26;">24.08.2023 11:23</div>
<div class="a" style="left:1595px;top:547.00px;font-size:13px;line-height:13px;font-weight:400;color:#1f1f26;">17.08.2023 07:17:42</div>
<div class="a" style="left:321px;top:569px;width:1528px;height:1px;background:#e3e3ea"></div>
<div class="a" style="left:329px;top:575px;width:13px;height:14px;border:1.3px solid #7c80ea;border-radius:3px;background:#fff"></div>
<svg class="a" style="left:373.5px;top:577.8px" width="10" height="13" viewBox="0 0 10 13"><rect x="0.3" y="0" width="8.6" height="12.6" rx="1.2" fill="#c3c6f2"/><rect x="0.3" y="0" width="8.6" height="8.6" rx="0.8" fill="#2b33d3"/></svg>
<div class="a" style="left:389px;top:578.00px;font-size:13px;line-height:13px;font-weight:400;color:#1f1f26;">Pixel 4a</div>
<div class="a" style="left:563px;top:578.00px;font-size:13px;line-height:13px;font-weight:400;color:#1f1f26;">Pixel 4a</div>
<div class="a" style="left:748px;top:578.00px;font-size:13px;line-height:13px;font-weight:400;color:#1f1f26;">Google</div>
<svg class="a" style="left:1075px;top:578px" width="15" height="10" viewBox="0 0 15 10"><path d="M0.3,9.6 Q0.8,3.2 7.5,3 Q14.2,3.2 14.7,9.6Z" fill="#15861f"/><path d="M3,4.2 L1.8,1.6 M12,4.2 L13.2,1.6" stroke="#15861f" stroke-width="0.9"/><circle cx="4.3" cy="6.5" r="0.75" fill="#f8f8fb"/><circle cx="10.7" cy="6.5" r="0.75" fill="#f8f8fb"/></svg>
<div class="a" style="left:1097px;top:578.00px;font-size:13px;line-height:13px;font-weight:400;color:#1f1f26;">Android 13</div>
<div class="a" style="left:1236px;top:578.00px;font-size:13px;line-height:13px;font-weight:400;color:#1f1f26;">master</div>
<svg class="a" style="left:1392.5px;top:578px" width="11" height="12" viewBox="0 0 11 12"><defs><linearGradient id="ag" x1="0" y1="0" x2="0" y2="1"><stop offset="0" stop-color="#1e8a3a"/><stop offset="1" stop-color="#8fd69f"/></linearGradient></defs><path d="M5.5,1.2 L5.5,11.6 M1,5.6 L5.5,1.2 L10,5.6" fill="none" stroke="url(#ag)" stroke-width="1.6"/></svg>
<div class="a" style="left:1410px;top:578.00px;font-size:13px;line-height:13px;font-weight:400;color:#1f1f26;">17.10.2023 08:56</div>
<div class="a" style="left:1595px;top:578.00px;font-size:13px;line-height:13px;font-weight:400;color:#1f1f26;">17.10.2023 06:23:07</div>
<div class="a" style="left:321px;top:600px;width:1528px;height:1px;background:#e3e3ea"></div>
<div class="a" style="left:329px;top:606px;width:13px;height:14px;border:1.3px solid #7c80ea;border-radius:3px;background:#fff"></div>
<svg class="a" style="left:373.5px;top:608.8px" width="10" height="13" viewBox="0 0 10 13"><rect x="0.3" y="0" width="8.6" height="12.6" rx="1.2" fill="#c3c6f2"/><rect x="0.3" y="0" width="8.6" height="8.6" rx="0.8" fill="#2b33d3"/></svg>
<div class="a" style="left:389px;top:609.00px;font-size:13px;line-height:13px;font-weight:400;color:#1f1f26;">Pixel 4a</div>
<div class="a" style="left:563px;top:609.00px;font-size:13px;line-height:13px;font-weight:400;color:#1f1f26;">Pixel 4a</div>
<div class="a" style="left:748px;top:609.00px;font-size:13px;line-height:13px;font-weight:400;color:#1f1f26;">Google</div>
<svg class="a" style="left:1075px;top:609px" width="15" height="10" viewBox="0 0 15 10"><path d="M0.3,9.6 Q0.8,3.2 7.5,3 Q14.2,3.2 14.7,9.6Z" fill="#15861f"/><path d="M3,4.2 L1.8,1.6 M12,4.2 L13.2,1.6" stroke="#15861f" stroke-width="0.9"/><circle cx="4.3" cy="6.5" r="0.75" fill="#f8f8fb"/><circle cx="10.7" cy="6.5" r="0.75" fill="#f8f8fb"/></svg>
<div class="a" style="left:1097px;top:609.00px;font-size:13px;line-height:13px;font-weight:400;color:#1f1f26;">Android 13</div>
<div class="a" style="left:1236px;top:609.00px;font-size:13px;line-height:13px;font-weight:400;color:#1f1f26;">1.8.17</div>
<svg class="a" style="left:1392.5px;top:609px" width="11" height="12" viewBox="0 0 11 12"><defs><linearGradient id="ag" x1="0" y1="0" x2="0" y2="1"><stop offset="0" stop-color="#1e8a3a"/><stop offset="1" stop-color="#8fd69f"/></linearGradient></defs><path d="M5.5,1.2 L5.5,11.6 M1,5.6 L5.5,1.2 L10,5.6" fill="none" stroke="url(#ag)" stroke-width="1.6"/></svg>
<div class="a" style="left:1410px;top:609.00px;font-size:13px;line-height:13px;font-weight:400;color:#1f1f26;">18.10.2023 07:51</div>
<div class="a" style="left:1595px;top:609.00px;font-size:13px;line-height:13px;font-weight:400;color:#1f1f26;">17.10.2023 07:34:50</div>
<div class="a" style="left:321px;top:631px;width:1528px;height:1px;background:#e3e3ea"></div>
<div class="a" style="left:329px;top:637px;width:13px;height:14px;border:1.3px solid #7c80ea;border-radius:3px;background:#fff"></div>
<svg class="a" style="left:373.5px;top:639.8px" width="10" height="13" viewBox="0 0 10 13"><rect x="0.3" y="0" width="8.6" height="12.6" rx="1.2" fill="#c3c6f2"/><rect x="0.3" y="0" width="8.6" height="8.6" rx="0.8" fill="#2b33d3"/></svg>
<div class="a" style="left:389px;top:640.00px;font-size:13px;line-height:13px;font-weight:400;color:#1f1f26;">Galaxy A10</div>
<div class="a" style="left:563px;top:640.00px;font-size:13px;line-height:13px;font-weight:400;color:#1f1f26;">SM-A105FN</div>
<div class="a" style="left:748px;top:640.00px;font-size:13px;line-height:13px;font-weight:400;color:#1f1f26;">samsung</div>
<div class="a" style="left:898px;top:640.00px;font-size:13px;line-height:13px;font-weight:400;color:#1f1f26;letter-spacing:0.28px;">355460115822048</div>
<svg class="a" style="left:1075px;top:640px" width="15" height="10" viewBox="0 0 15 10"><path d="M0.3,9.6 Q0.8,3.2 7.5,3 Q14.2,3.2 14.7,9.6Z" fill="#15861f"/><path d="M3,4.2 L1.8,1.6 M12,4.2 L13.2,1.6" stroke="#15861f" stroke-width="0.9"/><circle cx="4.3" cy="6.5" r="0.75" fill="#f8f8fb"/><circle cx="10.7" cy="6.5" r="0.75" fill="#f8f8fb"/></svg>
<div class="a" style="left:1097px;top:640.00px;font-size:13px;line-height:13px;font-weight:400;color:#1f1f26;">Android 11</div>
<div class="a" style="left:1236px;top:640.00px;font-size:13px;line-height:13px;font-weight:400;color:#1f1f26;">1.8.16</div>
<svg class="a" style="left:1392.5px;top:640px" width="11" height="12" viewBox="0 0 11 12"><defs><linearGradient id="ag" x1="0" y1="0" x2="0" y2="1"><stop offset="0" stop-color="#1e8a3a"/><stop offset="1" stop-color="#8fd69f"/></linearGradient></defs><path d="M5.5,1.2 L5.5,11.6 M1,5.6 L5.5,1.2 L10,5.6" fill="none" stroke="url(#ag)" stroke-width="1.6"/></svg>
<div class="a" style="left:1410px;top:640.00px;font-size:13px;line-height:13px;font-weight:400;color:#1f1f26;">17.10.2023 11:41</div>
<div class="a" style="left:1595px;top:640.00px;font-size:13px;line-height:13px;font-weight:400;color:#1f1f26;">18.09.2023 05:42:28</div>
<div class="a" style="left:321px;top:662px;width:1528px;height:1px;background:#e3e3ea"></div>
<div class="a" style="left:329px;top:668px;width:13px;height:14px;border:1.3px solid #7c80ea;border-radius:3px;background:#fff"></div>
<svg class="a" style="left:373.5px;top:670.8px" width="10" height="13" viewBox="0 0 10 13"><rect x="0.3" y="0" width="8.6" height="12.6" rx="1.2" fill="#c3c6f2"/><rect x="0.3" y="0" width="8.6" height="8.6" rx="0.8" fill="#2b33d3"/></svg>
<div class="a" style="left:389px;top:671.00px;font-size:13px;line-height:13px;font-weight:400;color:#1f1f26;">Galaxy A13</div>
<div class="a" style="left:563px;top:671.00px;font-size:13px;line-height:13px;font-weight:400;color:#1f1f26;">SM-A135F</div>
<div class="a" style="left:748px;top:671.00px;font-size:13px;line-height:13px;font-weight:400;color:#1f1f26;">samsung</div>
<div class="a" style="left:898px;top:671.00px;font-size:13px;line-height:13px;font-weight:400;color:#1f1f26;letter-spacing:0.28px;">356002720127758</div>
<svg class="a" style="left:1075px;top:671px" width="15" height="10" viewBox="0 0 15 10"><path d="M0.3,9.6 Q0.8,3.2 7.5,3 Q14.2,3.2 14.7,9.6Z" fill="#15861f"/><path d="M3,4.2 L1.8,1.6 M12,4.2 L13.2,1.6" stroke="#15861f" stroke-width="0.9"/><circle cx="4.3" cy="6.5" r="0.75" fill="#f8f8fb"/><circle cx="10.7" cy="6.5" r="0.75" fill="#f8f8fb"/></svg>
<div class="a" style="left:1097px;top:671.00px;font-size:13px;line-height:13px;font-weight:400;color:#1f1f26;">Android 12</div>
<div class="a" style="left:1236px;top:671.00px;font-size:13px;line-height:13px;font-weight:400;color:#1f1f26;">1.8.17</div>
<svg class="a" style="left:1392.5px;top:671px" width="11" height="12" viewBox="0 0 11 12"><defs><linearGradient id="ag" x1="0" y1="0" x2="0" y2="1"><stop offset="0" stop-color="#1e8a3a"/><stop offset="1" stop-color="#8fd69f"/></linearGradient></defs><path d="M5.5,1.2 L5.5,11.6 M1,5.6 L5.5,1.2 L10,5.6" fill="none" stroke="url(#ag)" stroke-width="1.6"/></svg>
<div class="a" style="left:1410px;top:671.00px;font-size:13px;line-height:13px;font-weight:400;color:#1f1f26;">20.11.2023 17:04</div>
<div class="a" style="left:1595px;top:671.00px;font-size:13px;line-height:13px;font-weight:400;color:#1f1f26;">25.10.2023 06:54:16</div>
<div class="a" style="left:321px;top:693px;width:1528px;height:1px;background:#e3e3ea"></div>
<div class="a" style="left:329px;top:699px;width:13px;height:14px;border:1.3px solid #7c80ea;border-radius:3px;background:#fff"></div>
<svg class="a" style="left:373.5px;top:701.8px" width="10" height="13" viewBox="0 0 10 13"><rect x="0.3" y="0" width="8.6" height="12.6" rx="1.2" fill="#c3c6f2"/><rect x="0.3" y="0" width="8.6" height="8.6" rx="0.8" fill="#2b33d3"/></svg>
<div class="a" style="left:389px;top:702.00px;font-size:13px;line-height:13px;font-weight:400;color:#1f1f26;">Pixel 4a</div>
<div class="a" style="left:563px;top:702.00px;font-size:13px;line-height:13px;font-weight:400;color:#1f1f26;">Pixel 4a</div>
<div class="a" style="left:748px;top:702.00px;font-size:13px;line-height:13px;font-weight:400;color:#1f1f26;">Google</div>
<div class="a" style="left:898px;top:702.00px;font-size:13px;line-height:13px;font-weight:400;color:#1f1f26;letter-spacing:0.28px;">357480103545201</div>
<svg class="a" style="left:1075px;top:702px" width="15" height="10" viewBox="0 0 15 10"><path d="M0.3,9.6 Q0.8,3.2 7.5,3 Q14.2,3.2 14.7,9.6Z" fill="#15861f"/><path d="M3,4.2 L1.8,1.6 M12,4.2 L13.2,1.6" stroke="#15861f" stroke-width="0.9"/><circle cx="4.3" cy="6.5" r="0.75" fill="#f8f8fb"/><circle cx="10.7" cy="6.5" r="0.75" fill="#f8f8fb"/></svg>
<div class="a" style="left:1097px;top:702.00px;font-size:13px;line-height:13px;font-weight:400;color:#1f1f26;">Android 13</div>
<div class="a" style="left:1236px;top:702.00px;font-size:13px;line-height:13px;font-weight:400;color:#1f1f26;">1.8.18</div>
<svg class="a" style="left:1392.5px;top:702px" width="11" height="12" viewBox="0 0 11 12"><defs><linearGradient id="ag" x1="0" y1="0" x2="0" y2="1"><stop offset="0" stop-color="#1e8a3a"/><stop offset="1" stop-color="#8fd69f"/></linearGradient></defs><path d="M5.5,1.2 L5.5,11.6 M1,5.6 L5.5,1.2 L10,5.6" fill="none" stroke="url(#ag)" stroke-width="1.6"/></svg>
<div class="a" style="left:1410px;top:702.00px;font-size:13px;line-height:13px;font-weight:400;color:#1f1f26;">22.11.2023 19:36</div>
<div class="a" style="left:1595px;top:702.00px;font-size:13px;line-height:13px;font-weight:400;color:#1f1f26;">15.11.2023 09:51:40</div>
<div class="a" style="left:321px;top:724px;width:1528px;height:1px;background:#e3e3ea"></div>
<div class="a" style="left:329px;top:730px;width:13px;height:14px;border:1.3px solid #7c80ea;border-radius:3px;background:#fff"></div>
<svg class="a" style="left:373.5px;top:732.8px" width="10" height="13" viewBox="0 0 10 13"><rect x="0.3" y="0" width="8.6" height="12.6" rx="1.2" fill="#c3c6f2"/><rect x="0.3" y="0" width="8.6" height="8.6" rx="0.8" fill="#2b33d3"/></svg>
<div class="a" style="left:389px;top:733.00px;font-size:13px;line-height:13px;font-weight:400;color:#1f1f26;">Galaxy A10</div>
<div class="a" style="left:563px;top:733.00px;font-size:13px;line-height:13px;font-weight:400;color:#1f1f26;">SM-A105FN</div>
<div class="a" style="left:748px;top:733.00px;font-size:13px;line-height:13px;font-weight:400;color:#1f1f26;">samsung</div>
<svg class="a" style="left:1075px;top:733px" width="15" height="10" viewBox="0 0 15 10"><path d="M0.3,9.6 Q0.8,3.2 7.5,3 Q14.2,3.2 14.7,9.6Z" fill="#15861f"/><path d="M3,4.2 L1.8,1.6 M12,4.2 L13.2,1.6" stroke="#15861f" stroke-width="0.9"/><circle cx="4.3" cy="6.5" r="0.75" fill="#f8f8fb"/><circle cx="10.7" cy="6.5" r="0.75" fill="#f8f8fb"/></svg>
<div class="a" style="left:1097px;top:733.00px;font-size:13px;line-height:13px;font-weight:400;color:#1f1f26;">Android 11</div>
<div class="a" style="left:1236px;top:733.00px;font-size:13px;line-height:13px;font-weight:400;color:#1f1f26;">1.8.16</div>
<svg class="a" style="left:1392.5px;top:733px" width="11" height="12" viewBox="0 0 11 12"><defs><linearGradient id="ag" x1="0" y1="0" x2="0" y2="1"><stop offset="0" stop-color="#1e8a3a"/><stop offset="1" stop-color="#8fd69f"/></linearGradient></defs><path d="M5.5,1.2 L5.5,11.6 M1,5.6 L5.5,1.2 L10,5.6" fill="none" stroke="url(#ag)" stroke-width="1.6"/></svg>
<div class="a" style="left:1410px;top:733.00px;font-size:13px;line-height:13px;font-weight:400;color:#1f1f26;">05.10.2023 13:35</div>
<div class="a" style="left:1595px;top:733.00px;font-size:13px;line-height:13px;font-weight:400;color:#1f1f26;">18.09.2023 10:29:28</div>
<div class="a" style="left:321px;top:755px;width:1578px;height:2px;background:#e3e3ea"></div>
<svg class="a" style="left:338px;top:775px" width="10" height="9"><path d="M0.5,0 L2,0 L2,8 L0.5,8Z M8.5,0 L8.5,8 L2.5,4Z" fill="#666"/></svg>
<svg class="a" style="left:370px;top:775px" width="10" height="9"><path d="M6,0 L6,8 L0,4Z" fill="#666"/></svg>
<svg class="a" style="left:432px;top:775px" width="10" height="9"><path d="M0,0 L6,4 L0,8Z" fill="#666"/></svg>
<svg class="a" style="left:461px;top:775px" width="10" height="9"><path d="M0,0 L6,4 L0,8Z M6.5,0 L8,0 L8,8 L6.5,8Z" fill="#666"/></svg>
<div class="a" style="left:389px;top:763px;width:31px;height:31px;background:#c9cbf0"></div>
<div class="a" style="left:401.5px;top:772.30px;font-size:13px;line-height:13px;font-weight:400;color:#3b3ecf;">1</div>
<div class="a" style="left:495px;top:772.30px;font-size:13px;line-height:13px;font-weight:400;color:#1f1f26;">Strona</div>
<div class="a" style="left:540px;top:763px;width:65px;height:31px;border:1px solid #e0e4f5;border-radius:5px;background:#f4f5fb"></div>
<div class="a" style="left:552px;top:772.30px;font-size:13px;line-height:13px;font-weight:400;color:#1f1f26;">1</div>
<div class="a" style="left:612px;top:772.30px;font-size:13px;line-height:13px;font-weight:400;color:#1f1f26;">z 1</div>
<div class="a" style="left:642px;top:763px;width:65px;height:31px;border:1px solid #e0e4f5;border-radius:5px;background:#f4f5fb;overflow:hidden"><div style="position:absolute;right:0;top:0;width:28px;height:29px;background:#e6e9fc"></div></div>
<div class="a" style="left:653px;top:772.30px;font-size:13px;line-height:13px;font-weight:400;color:#1f1f26;">20</div>
<svg class="a" style="left:689px;top:776px" width="8" height="6"><path d="M0,0 L8,0 L4.0,6Z" fill="#3b3ecf"/></svg>
<div class="a" style="left:714px;top:772.30px;font-size:13px;line-height:13px;font-weight:400;color:#1f1f26;">na stronę</div>
<div class="a" style="left:1642px;top:772.30px;font-size:13px;line-height:13px;font-weight:400;color:#1f1f26;letter-spacing:0.08px">Wyświetlanie elementów 1 - 12 z 12</div>
<svg class="a" style="left:1871px;top:771px" width="16" height="16" viewBox="0 0 16 16"><path d="M13.5,8.5 A5.6,5.6 0 1 1 11.3,3.6" fill="none" stroke="#333" stroke-width="1.8"/><path d="M9.2,1 L14.2,1.2 L13.6,6.2Z" fill="#333"/></svg>
<div class="a" style="left:339px;top:141px;width:199px;height:443px;background:#fff;border-radius:5px;box-shadow:0 2px 8px rgba(0,0,0,0.13)"></div>
<div class="a" style="left:339px;top:272px;width:199px;height:26px;background:#e8eaed"></div>
<div class="a" style="left:339px;top:141px;width:199px;height:27px;border:3px solid #dcdedd;border-radius:5px 5px 0 0"></div>
<div class="a" style="left:351.5px;top:149.00px;font-size:13px;line-height:13px;font-weight:400;color:#1e1e1e;">Zdalne czyszczenie</div>
<div class="a" style="left:351.5px;top:175.00px;font-size:13px;line-height:13px;font-weight:400;color:#1e1e1e;">Zrzut ekranu</div>
<div class="a" style="left:351.5px;top:201.00px;font-size:13px;line-height:13px;font-weight:400;color:#1e1e1e;">Pobierz logi</div>
<div class="a" style="left:351.5px;top:227.00px;font-size:13px;line-height:13px;font-weight:400;color:#1e1e1e;">Wyślij powiadomienie</div>
<div class="a" style="left:351.5px;top:253.00px;font-size:13px;line-height:13px;font-weight:400;color:#1e1e1e;">Skanuj pliki</div>
<div class="a" style="left:351.5px;top:279.00px;font-size:13px;line-height:13px;font-weight:400;color:#1e1e1e;">Kopia zapasowa</div>
<div class="a" style="left:351.5px;top:305.00px;font-size:13px;line-height:13px;font-weight:400;color:#1e1e1e;">Odtwórz kopię zapasową</div>
<div class="a" style="left:351.5px;top:331.00px;font-size:13px;line-height:13px;font-weight:400;color:#1e1e1e;">Przypisz politykę</div>
<div class="a" style="left:351.5px;top:357.00px;font-size:13px;line-height:13px;font-weight:400;color:#1e1e1e;">Przypisz profil</div>
<div class="a" style="left:351.5px;top:383.00px;font-size:13px;line-height:13px;font-weight:400;color:#1e1e1e;">Przypisz osobę</div>
<div class="a" style="left:351.5px;top:409.00px;font-size:13px;line-height:13px;font-weight:400;color:#1e1e1e;">Dezaktywacja</div>
<div class="a" style="left:351.5px;top:435.00px;font-size:13px;line-height:13px;font-weight:400;color:#1e1e1e;">Reset hasła</div>
<div class="a" style="left:351.5px;top:461.00px;font-size:13px;line-height:13px;font-weight:400;color:#1e1e1e;">Zainstaluj aplikację</div>
<div class="a" style="left:351.5px;top:487.00px;font-size:13px;line-height:13px;font-weight:400;color:#1e1e1e;">Uruchom ponownie</div>
<div class="a" style="left:351.5px;top:513.00px;font-size:13px;line-height:13px;font-weight:400;color:#1e1e1e;">Zablokuj</div>
<div class="a" style="left:351.5px;top:539.00px;font-size:13px;line-height:13px;font-weight:400;color:#1e1e1e;">Odblokuj</div>
<div class="a" style="left:351.5px;top:565.00px;font-size:13px;line-height:13px;font-weight:400;color:#1e1e1e;">Check for agent update</div>
</body></html>
